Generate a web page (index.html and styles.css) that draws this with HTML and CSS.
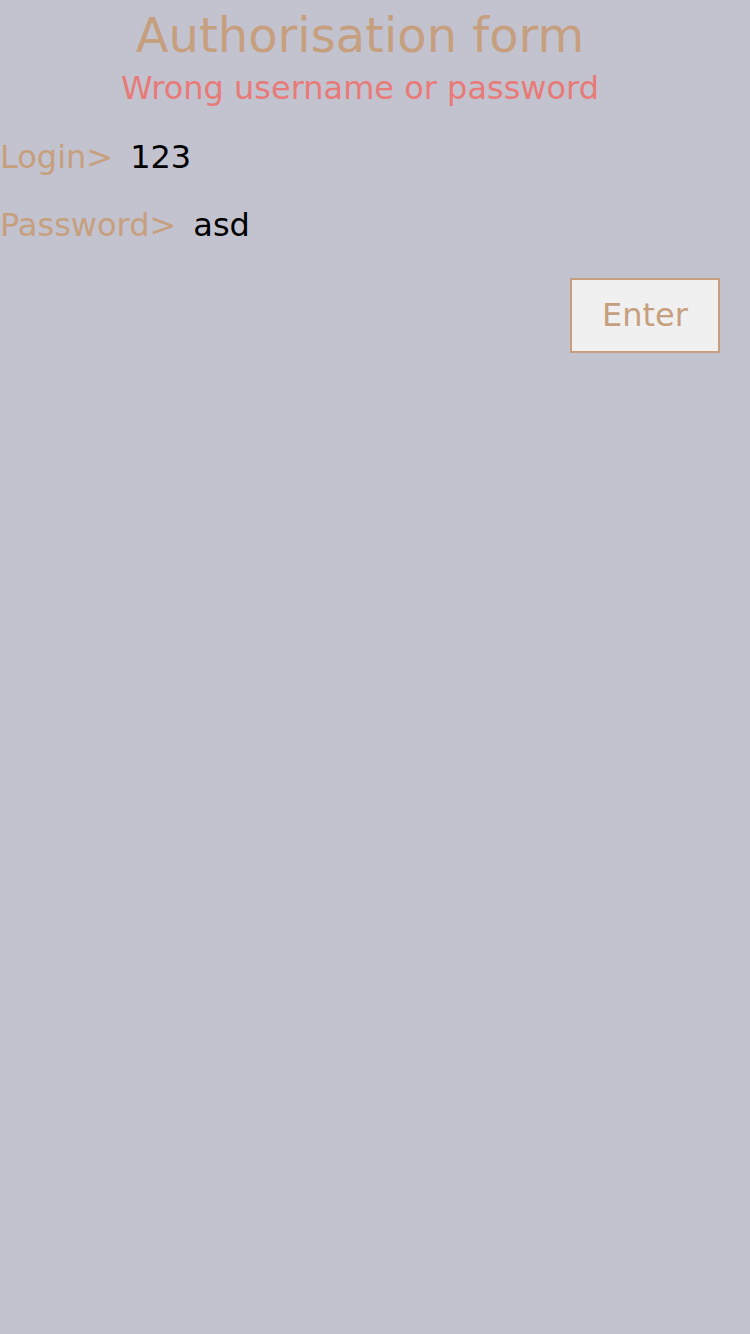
FILE: index.html
```html
<!DOCTYPE html>
<html lang="en">
<head>
<meta charset="utf-8">
<title>Authorisation form</title>
<link rel="stylesheet" href="styles.css">
</head>
<body>
<form class="auth">
  <h1 class="auth-title">Authorisation form</h1>
  <p class="auth-error">Wrong username or password</p>
  <div class="auth-row">
    <label class="auth-label" for="login">Login&gt;</label>
    <input class="auth-input" id="login" type="text" value="123">
  </div>
  <div class="auth-row">
    <label class="auth-label" for="password">Password&gt;</label>
    <input class="auth-input" id="password" type="text" value="asd">
  </div>
  <div class="auth-actions">
    <button class="auth-button" type="button">Enter</button>
  </div>
</form>
</body>
</html>
```
FILE: styles.css
```css
html, body {
  margin: 0;
  padding: 0;
  background: #c3c3cf;
  min-height: 100%;
}
body {
  font-family: "DejaVu Sans", Verdana, sans-serif;
  color: #c69f7e;
}
.auth {
  width: 720px;
  display: flex;
  flex-direction: column;
}
.auth-title {
  margin: 7px 0 0;
  font-size: 48px;
  line-height: 56px;
  font-weight: normal;
  text-align: center;
  color: #c69f7e;
}
.auth-error {
  margin: 7px 0 0;
  font-size: 32px;
  line-height: 37px;
  text-align: center;
  color: #e87a78;
}
.auth-row {
  display: flex;
  align-items: baseline;
  gap: 15px;
  margin-top: 31px;
  height: 37px;
}
.auth-row:first-of-type {
  margin-top: 32px;
}
.auth-label {
  font-size: 32px;
  line-height: 37px;
  color: #c69f7e;
}
.auth-input {
  font-family: "DejaVu Sans", Verdana, sans-serif;
  font-size: 32px;
  line-height: 37px;
  color: #000;
  background: transparent;
  border: none;
  padding: 0 2px;
  margin: 0;
  outline: none;
  width: 300px;
}
.auth-actions {
  display: flex;
  justify-content: flex-end;
  margin-top: 34px;
}
.auth-button {
  width: 150px;
  height: 75px;
  box-sizing: border-box;
  border: 2px solid #c69f7e;
  background: #f0f0f0;
  color: #c69f7e;
  font-family: "DejaVu Sans", Verdana, sans-serif;
  font-size: 32px;
  line-height: 37px;
  padding: 0;
  margin: 0;
}
```
